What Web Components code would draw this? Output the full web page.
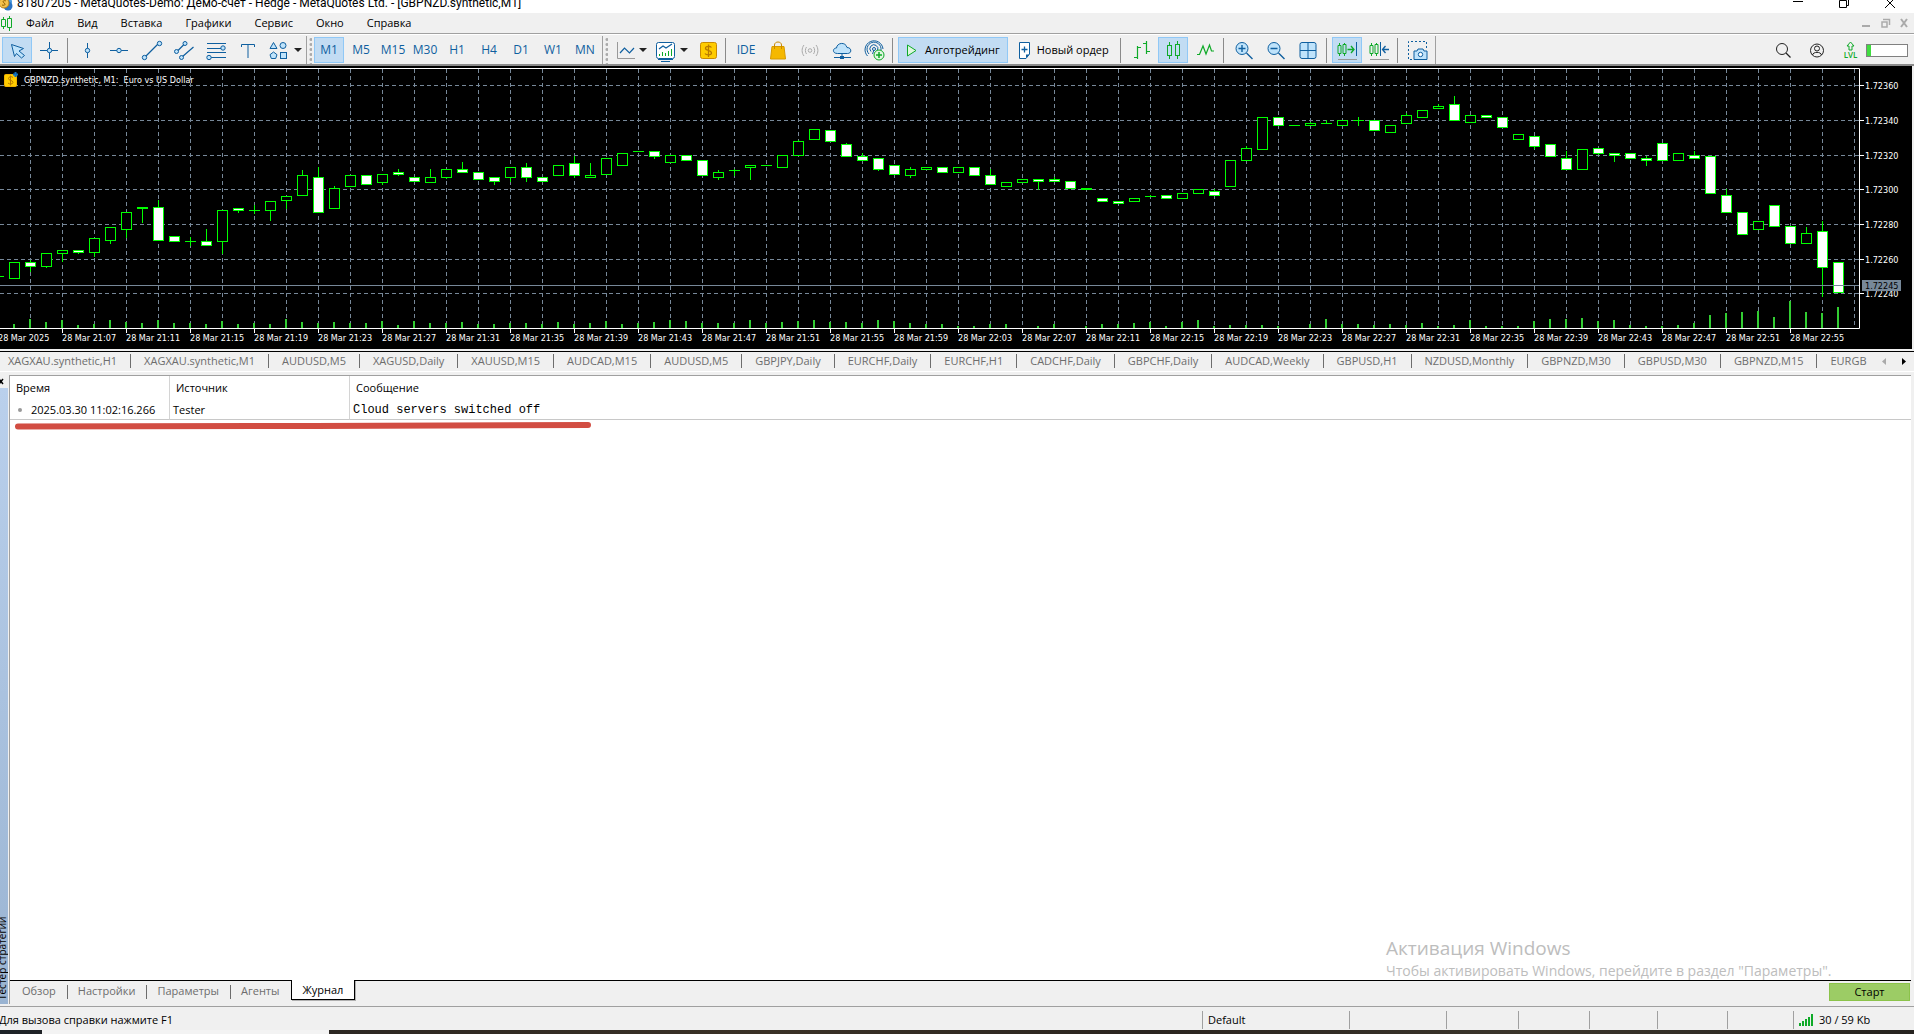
<!DOCTYPE html>
<html lang="ru">
<head>
<meta charset="utf-8">
<meta name="viewport" content="width=device-width, initial-scale=1">
<title>MetaQuotes-Demo</title>
<style>
html, body { height: 100%; }
body {
    margin: 0;
    display: flex;
    flex-direction: column;
    overflow: hidden;
    background: #f0f0f0;
    color: #000;
    font-family: "Open Sans", "Noto Sans", sans-serif;
    font-size: 11px;
    line-height: 16px;
}
</style>
</head>
<body>
<mt-titlebar>81807205 - MetaQuotes-Demo: Демо-счет - Hedge - MetaQuotes Ltd. - [GBPNZD.synthetic,M1]</mt-titlebar>
<mt-menubar items="Файл,Вид,Вставка,Графики,Сервис,Окно,Справка"></mt-menubar>
<mt-toolbar></mt-toolbar>
<mt-chart caption="GBPNZD.synthetic, M1:  Euro vs US Dollar"></mt-chart>
<mt-chart-tabs items="XAGXAU.synthetic,H1|XAGXAU.synthetic,M1|AUDUSD,M5|XAGUSD,Daily|XAUUSD,M15|AUDCAD,M15|AUDUSD,M5|GBPJPY,Daily|EURCHF,Daily|EURCHF,H1|CADCHF,Daily|GBPCHF,Daily|AUDCAD,Weekly|GBPUSD,H1|NZDUSD,Monthly|GBPNZD,M30|GBPUSD,M30|GBPNZD,M15|EURGB"></mt-chart-tabs>
<mt-tester caption="Тестер стратегии">
    <mt-journal></mt-journal>
    <os-watermark slot="overlay">
        <span slot="title">Активация Windows</span>
        Чтобы активировать Windows, перейдите в раздел "Параметры".
    </os-watermark>
</mt-tester>
<mt-statusbar>
    Для вызова справки нажмите F1
    <span slot="profile">Default</span>
    <span slot="traffic">30 / 59 Kb</span>
</mt-statusbar>
<os-taskbar></os-taskbar>

<script>
const BLUE = '#0f5f9f';
const FILL = '#bfe3fb';
const GREEN = '#0faa28';

// all toolbar icons share a 30x26 box, the size of one button
const ICONS = {
    cursor: `<path d="M9.5 7.5L21.5 11.5L17 14L22.5 18.5L19.500 21L14.500 16.500L12.500 19.500Z" fill="${FILL}" stroke="${BLUE}"/>`,
    cross: `<path d="M6 13.500H24M15.500 5V22" stroke="${BLUE}"/><circle cx="15.500" cy="13.500" r="2.200" fill="${FILL}" stroke="${BLUE}"/>`,
    vline: `<path d="M14.500 6V21" stroke="${BLUE}"/><circle cx="14.500" cy="13.500" r="2.200" fill="${FILL}" stroke="${BLUE}"/>`,
    hline: `<path d="M5 13.500H23" stroke="${BLUE}"/><circle cx="14" cy="13.500" r="2.200" fill="${FILL}" stroke="${BLUE}"/>`,
    trend: `<path d="M7 21L22 6" stroke="${BLUE}" stroke-width="1.200"/><g fill="${FILL}" stroke="${BLUE}"><circle cx="7.500" cy="20.500" r="2.200"/><circle cx="22.500" cy="6.500" r="2.200"/></g>`,
    channel: `<path d="M8 14.500L16 6.500M13 20L24.500 10" stroke="${BLUE}" stroke-width="1.200"/><g fill="${FILL}" stroke="${BLUE}"><circle cx="7.500" cy="14.500" r="2"/><circle cx="16" cy="6.500" r="2"/><circle cx="12.500" cy="20.500" r="2"/></g>`,
    fibo: `<path d="M6 6.500H25M6 11.500H20M6 15.500H25M10 20.500H25" stroke="${BLUE}"/><g fill="${FILL}" stroke="${BLUE}"><circle cx="22" cy="11" r="2.200"/><circle cx="8" cy="20.500" r="2.200"/></g>`,
    text: `<path d="M8.500 10V7.500H21.500V10M15 7.500V21" stroke="${BLUE}"/>`,
    shapes: `<g fill="${FILL}" stroke="${BLUE}"><path d="M9.500 5.500L13 11.500H6Z"/><circle cx="19" cy="8.500" r="3"/><path d="M9.500 15L13 17.700L11.700 21.500H7.300L6 17.700Z"/><rect x="16.500" y="15.500" width="6" height="6"/></g>`,
    line: `<path d="M8.500 5V21.500H26" stroke="#999"/><path d="M11 16L15.500 11L20.500 16L25 11" stroke="${BLUE}" stroke-width="1.200"/>`,
    indicators: `<rect x="6.500" y="5.500" width="18" height="16" rx="2" fill="#fff" stroke="${BLUE}"/><path d="M8 22.500H23M11 24.500H20" stroke="${BLUE}"/><path d="M9 12L13 9L16 11L22 7" stroke="${BLUE}" stroke-width="1.200"/><path d="M9.500 19V17M12.500 19V15M15.500 19V16M18.500 19V14M21.500 19V12" stroke="${GREEN}"/>`,
    symbol: `<rect x="8.500" y="5.500" width="16" height="16" rx="2" fill="#fc0" stroke="#c98a00"/><path d="M19.500 10.500C18.500 9 13.500 8.500 13.500 11.200C13.500 14 19.500 13 19.500 16C19.500 18.500 14 18.300 13 16.500M16.500 7.500V20" stroke="#b87a00" stroke-width="1.300"/>`,
    bag: `<path d="M9 9.500H21L22.500 22H7.500Z" fill="#f5b800" stroke="#d69a00"/><path d="M11.500 12V8C11.500 4 18.500 4 18.500 8V12" stroke="#c98a00"/>`,
    signal: `<g stroke="#aaa"><circle cx="15" cy="13.500" r="1.800"/><path d="M11.500 10C10 12 10 15 11.500 17M18.500 10C20 12 20 15 18.500 17M9 8C6.500 11 6.500 16 9 19M21 8C23.500 11 23.500 16 21 19"/></g>`,
    cloud: `<path d="M10.500 16.500C5 16.500 5.500 11 9.500 11C10 5.500 18.500 4.500 20 10.500C25 10.500 25 16.500 20.500 16.500Z" fill="${FILL}" stroke="${BLUE}"/><path d="M15 16.500V20M7 20.500H24" stroke="${BLUE}"/><rect x="13" y="19" width="4" height="3" fill="${BLUE}"/>`,
    antenna: `<g stroke="${BLUE}"><circle cx="15" cy="12" r="1.500"/><path d="M12 14.500A4 4 0 1 1 18.500 13.500M10 17A7 7 0 1 1 22 13M8.500 19A9 9 0 1 1 24 12M13.500 17L15 13"/></g><circle cx="20" cy="18" r="5" fill="#dff7df" stroke="${GREEN}"/><path d="M17 18H23M20 15V21" stroke="${GREEN}" stroke-width="1.500"/>`,
    bars: `<path d="M11.500 9V22M8 20.500H11.500M11.500 10.500H15M20.500 4V17M17 6.500H20.500M20.500 14.500H24" stroke="${GREEN}" stroke-width="1.200"/>`,
    candles: `<path d="M11.500 5V22M19.500 4V22" stroke="${GREEN}"/><g fill="#c2dcf3" stroke="${GREEN}"><rect x="9.500" y="8.500" width="4" height="10"/><rect x="17.500" y="7.500" width="4" height="11"/></g>`,
    polyline: `<path d="M7 17.500H9.500L13 9L16 17L19.500 8L21.500 14H24" stroke="${GREEN}" stroke-width="1.200"/>`,
    zoomin: `<circle cx="13" cy="11.500" r="6" fill="${FILL}" stroke="${BLUE}"/><path d="M9.500 11.500H16.500M13 8V15M17.500 16L23.500 22" stroke="${BLUE}" stroke-width="1.400"/>`,
    zoomout: `<circle cx="13" cy="11.500" r="6" fill="${FILL}" stroke="${BLUE}"/><path d="M9.500 11.500H16.500M17.500 16L23.500 22" stroke="${BLUE}" stroke-width="1.400"/>`,
    grid: `<rect x="7" y="5.500" width="16" height="16" rx="2" fill="${FILL}" stroke="${BLUE}"/><path d="M15 5.500V21.500M7 13.500H23" stroke="${BLUE}"/>`,
    autoscroll: `<path d="M7.500 6V19M12.500 6V19" stroke="${GREEN}"/><g fill="#c2dcf3" stroke="${GREEN}"><path d="M6 8.500H9V16.500H6ZM11 7.500H14V16.500H11Z"/></g><path d="M15.500 12.500H22M19 9L22 12.500L19 16" stroke="${GREEN}" stroke-width="1.300"/><path d="M24.500 5V19" stroke="${BLUE}"/><path d="M6 22.500H25" stroke="#999"/>`,
    shift: `<path d="M7.500 6V19M12.500 6V19" stroke="${GREEN}"/><g fill="#f0f0f0" stroke="${GREEN}"><path d="M6 8.500H9V16.500H6ZM11 7.500H14V16.500H11Z"/></g><path d="M16.500 5V19" stroke="${BLUE}"/><path d="M18.500 12.500H25M21.500 9L18.500 12.500L21.500 16" stroke="${BLUE}" stroke-width="1.300"/><path d="M6 22.500H25" stroke="#999"/>`,
    camera: `<path d="M9 22.500H5.500V4.500H23.500V11" stroke="${BLUE}" stroke-dasharray="2 2"/><path d="M11 14H14L15 12H20L21 14H24V22.500H11Z" fill="${FILL}" stroke="${BLUE}"/><circle cx="17.500" cy="17.500" r="2.200" fill="#fff" stroke="${BLUE}"/>`,
    search: `<circle cx="12" cy="12" r="5.500" stroke="#222"/><path d="M16 16L20.500 20.500" stroke="#222" stroke-width="1.300"/>`,
    user: `<g stroke="#222"><circle cx="15" cy="13.500" r="6.500"/><circle cx="15" cy="11.500" r="2.500"/><path d="M10.500 18C11 14.500 19 14.500 19.500 18"/></g>`,
    level: `<path d="M16.500 5L20 9H18V13H15V9H13Z" stroke="${GREEN}"/><text x="16.500" y="21" fill="${GREEN}" font-size="8" font-weight="600" text-anchor="middle">LVL</text>`
};

// the two buttons with captions use narrow icons
const SMALL_ICONS = {
    play: `<path d="M1.500 8L10 13.500L1.500 19Z" fill="#dff7df" stroke="${GREEN}"/>`,
    order: `<path d="M1.500 5.500H11.500V17L8 21.500H1.500Z" fill="#fff" stroke="${BLUE}"/><path d="M8 21V17.500H11.500Z" fill="${BLUE}"/><path d="M3.500 12.500H9.500M6.500 9.500V15.500" stroke="${BLUE}" stroke-width="1.300"/>`
};

// high, body top, body bottom, low, falling, volume; in pixels below the chart's top edge
const BARS = [
    [210,210,210,210,0,0], [196,196,212,212,0,4], [194,196,200,205,1,9], [187,187,200,201,0,6], [184,184,187,195,0,8],
    [184,184,186,187,1,3], [172,172,186,190,0,4], [161,161,174,177,0,8], [146,146,163,171,0,6], [141,141,142,156,1,5],
    [134,141,174,174,1,8], [170,170,175,175,1,5], [171,175,175,179,0,5], [163,175,179,179,1,4], [144,144,175,187,0,7],
    [142,142,144,146,1,4], [139,144,144,147,0,5], [135,135,144,154,0,4], [130,130,134,142,0,9], [104,109,129,129,0,6],
    [101,111,146,146,1,5], [120,122,142,142,0,6], [109,109,120,120,0,5], [109,109,118,118,1,5], [108,108,116,118,0,7],
    [103,106,108,109,1,3], [111,111,115,115,1,7], [103,111,116,116,0,5], [103,103,111,112,0,5], [96,103,106,106,1,6],
    [106,106,113,113,1,4], [111,111,115,118,1,4], [101,101,111,115,0,5], [97,101,111,115,1,5], [111,111,115,115,1,4],
    [99,99,109,109,0,6], [90,97,109,111,1,4], [97,109,111,111,0,5], [92,92,108,108,0,7], [87,87,99,99,0,4],
    [85,85,85,85,0,5], [85,85,90,92,1,6], [89,89,96,96,0,8], [89,89,94,94,1,7], [94,94,109,109,1,5],
    [104,106,111,113,0,5], [103,104,104,109,0,5], [99,99,101,113,0,8], [99,99,99,99,0,5], [89,89,101,101,0,6],
    [74,75,89,89,0,7], [63,63,73,73,0,8], [64,64,75,75,1,6], [77,78,90,90,1,6], [87,90,94,94,1,5],
    [92,92,103,104,1,8], [99,99,108,108,1,7], [101,103,109,111,0,5], [101,101,103,103,0,4], [101,101,106,106,1,4],
    [101,101,106,106,0,2], [101,101,109,109,1,2], [103,109,118,118,1,4], [116,116,120,120,0,4], [113,113,116,116,0,0],
    [113,113,115,123,1,2], [111,113,115,115,1,4], [115,115,122,122,1,0], [122,122,123,123,1,2], [132,132,135,135,1,4],
    [135,135,137,137,1,4], [132,132,135,135,0,5], [129,130,130,130,0,6], [129,129,132,132,1,2], [127,127,132,132,0,6],
    [123,123,127,127,0,8], [123,125,129,129,1,2], [94,94,120,120,0,3], [80,82,94,94,0,3], [51,51,83,83,0,3],
    [51,51,59,59,1,2], [59,59,59,59,0,0], [56,57,59,59,0,4], [54,57,57,57,0,9], [54,54,59,59,0,4],
    [51,54,54,59,0,4], [54,54,64,64,1,3], [59,59,66,66,0,4], [47,49,57,57,0,3], [44,44,51,51,0,5],
    [38,40,42,42,0,2], [30,38,54,54,1,3], [49,49,56,56,0,8], [49,49,51,51,1,2], [51,51,61,61,1,2],
    [68,68,73,73,0,2], [70,70,80,82,1,7], [78,78,90,90,1,9], [85,92,103,103,1,9], [83,83,103,103,0,10],
    [82,82,87,88,1,7], [87,87,89,95,1,8], [87,87,92,92,1,3], [90,92,94,99,1,2], [77,77,94,94,1,2],
    [87,87,94,94,0,3], [85,89,92,92,1,5], [90,90,127,127,1,13], [123,129,146,146,1,15], [146,146,168,168,1,16],
    [155,155,163,163,0,17], [139,139,160,160,1,11], [160,160,177,177,1,27], [161,167,177,177,0,16], [155,165,201,230,1,15],
    [196,196,226,226,1,21]
];

const PRICES = [['1.72360', 19], ['1.72340', 54], ['1.72320', 89], ['1.72300', 123], ['1.72280', 158], ['1.72260', 193], ['1.72240', 227]];

class MtElement extends HTMLElement {
    constructor() {
        super();
        this.template = document.createElement('template');
        this.attachShadow({ mode: 'open' });
    }
    get items() {
        return this.getAttribute('items').split(this.delimiter || ',');
    }
    connectedCallback() {
        this.render();
    }
    render() {
        this.template.innerHTML = this.html;
        this.shadowRoot.innerHTML = '';
        this.shadowRoot.appendChild(this.template.content.cloneNode(true));
    }
}

class MtTitlebar extends MtElement {
    static get tag() { return 'mt-titlebar'; }
    get html() {
        return `
        <style>
        :host {
            display: flex;
            flex: none;
            align-items: center;
            box-sizing: border-box;
            height: 13px;
            padding-bottom: 8px;
            overflow: hidden;
            background: #fff;
            font-family: Roboto, "Open Sans", sans-serif;
            font-size: 12px;
        }
        .title { flex: 1; white-space: nowrap; margin-left: 4px; }
        button {
            width: 46px;
            height: 24px;
            padding: 0;
            border: 0;
            background: none;
        }
        svg { display: block; margin: auto; fill: none; }
        .logo { margin: 0; }
        </style>
        <svg class="logo" width="13" height="16">
            <circle cx="6" cy="7" r="6" fill="#4b9be0"/><circle cx="8" cy="11" r="4.500" fill="#2b74c4"/>
            <circle cx="4" cy="8" r="5" fill="#f3c14b" stroke="#b98116"/><path d="M6 6C4 5 2 6 4 8C6 9 5 11 2 10" stroke="#8a5a00"/>
        </svg>
        <span class="title"><slot></slot></span>
        <button aria-label="Свернуть"><svg width="12" height="12"><path d="M0 4.500H10" stroke="#000"/></svg></button>
        <button aria-label="Восстановить"><svg width="12" height="12"><path d="M.5 3.500H7.500V10.500H.5ZM2.500 3V1.500H9.500V8.500H8" stroke="#000"/></svg></button>
        <button aria-label="Закрыть"><svg width="12" height="12"><path d="M0 1L10 11M10 1L0 11" stroke="#000"/></svg></button>`;
    }
}

class MtMenubar extends MtElement {
    static get tag() { return 'mt-menubar'; }
    get html() {
        return `
        <style>
        :host {
            display: flex;
            flex: none;
            align-items: center;
            height: 20px;
            border-bottom: 1px solid #a0a0a0;
        }
        nav { display: flex; flex: 1; padding-left: 2px; }
        button {
            border: 0;
            padding: 0 12px 0 11px;
            background: none;
            color: inherit;
            font: inherit;
        }
        .mdi { padding: 0 4px; }
        svg { display: block; fill: none; }
        </style>
        <svg width="13" height="16"><path d="M3.500 2V14M9.500 1V16" stroke="${GREEN}"/><path d="M1.500 4.500H5.500V11.500H1.500ZM7.500 3.500H11.500V12.500H7.500Z" fill="#f0f0f0" stroke="${GREEN}"/></svg>
        <nav>${this.items.map(item => `<button>${item}</button>`).join('')}</nav>
        <button class="mdi" aria-label="Свернуть окно"><svg width="11" height="10"><path d="M1 8H9" stroke="#aaa" stroke-width="2"/></svg></button>
        <button class="mdi" aria-label="Восстановить окно"><svg width="11" height="10"><path d="M3 1.500H9.500V7M2 4H7V9H2Z" stroke="#aaa" stroke-width="1.500"/></svg></button>
        <button class="mdi" aria-label="Закрыть окно"><svg width="11" height="10"><path d="M2 1L8 9M8 1L2 9" stroke="#aaa" stroke-width="2"/></svg></button>`;
    }
}

class MtTool extends MtElement {
    static get tag() { return 'mt-tool'; }
    get html() {
        const icon = this.getAttribute('icon');
        const label = this.getAttribute('label');
        let content = '<slot></slot>';
        if (ICONS[icon]) {
            content = `<svg width="30" height="26">${ICONS[icon]}</svg>`;
        }
        if (SMALL_ICONS[icon]) {
            content = `<svg width="12" height="26">${SMALL_ICONS[icon]}</svg><slot></slot>`;
        }
        if (this.hasAttribute('drop')) {
            content += '<i></i>';
        }
        return `
        <style>
        :host { display: block; flex: none; }
        button {
            display: flex;
            align-items: center;
            justify-content: center;
            box-sizing: border-box;
            width: 30px;
            height: 26px;
            padding: 0;
            border: 0;
            background: none;
            color: ${BLUE};
            font: inherit;
            font-size: 12px;
            white-space: nowrap;
        }
        :host([pressed]) button { background: #c2dcf3; box-shadow: inset 0 0 0 1px #90c8f6; }
        :host([drop]) button { width: 39px; padding-right: 8px; }
        :host([wide]) button {
            width: auto;
            padding: 0 8px;
            gap: 7px;
            color: #000;
            font-size: 11px;
        }
        svg { display: block; flex: none; fill: none; }
        i {
            flex: none;
            margin-right: -4px;
            border: 4px solid transparent;
            border-top-color: #222;
            border-bottom: 0;
        }
        </style>
        <button ${label ? `aria-label="${label}"` : ''} ${this.hasAttribute('pressed') ? 'aria-pressed="true"' : ''}>${content}</button>`;
    }
}

class MtToolbar extends MtElement {
    static get tag() { return 'mt-toolbar'; }
    get html() {
        const frames = ['M1', 'M5', 'M15', 'M30', 'H1', 'H4', 'D1', 'W1', 'MN'];
        return `
        <style>
        :host {
            display: flex;
            flex: none;
            align-items: center;
            gap: 2px;
            height: 28px;
            padding: 1px 0 0 2px;
            border-top: 1px solid #fff;
            border-bottom: 2px solid #8c8c8c;
        }
        .sep {
            flex: none;
            width: 1px;
            height: 25px;
            margin: 0 3px 0 1px;
            background: #8a8a8a;
        }
        .grip {
            flex: none;
            box-sizing: border-box;
            width: 6px;
            height: 28px;
            border-left: 1px solid #a0a0a0;
            background: radial-gradient(circle, #aaa 1px, transparent 2px) 2px 1px / 4px 5px repeat-y;
        }
        .end { width: 1px; height: 28px; background: #a0a0a0; }
        .account { display: flex; align-items: center; gap: 2px; margin-left: auto; margin-right: 6px; }
        progress {
            appearance: none;
            box-sizing: border-box;
            width: 42px;
            height: 13px;
            border: 1px solid #808080;
            background: #fff;
        }
        progress::-webkit-progress-bar { background: #fff; }
        progress::-webkit-progress-value { background: #3fdc3f; }
        </style>
        <mt-tool icon="cursor" label="Курсор" pressed></mt-tool>
        <mt-tool icon="cross" label="Перекрестие"></mt-tool>
        <div class="sep"></div>
        <mt-tool icon="vline" label="Вертикальная линия"></mt-tool>
        <mt-tool icon="hline" label="Горизонтальная линия"></mt-tool>
        <mt-tool icon="trend" label="Трендовая линия"></mt-tool>
        <mt-tool icon="channel" label="Канал"></mt-tool>
        <mt-tool icon="fibo" label="Фибоначчи"></mt-tool>
        <mt-tool icon="text" label="Текст"></mt-tool>
        <mt-tool icon="shapes" label="Фигуры" drop></mt-tool>
        <div class="grip"></div>
        ${frames.map((frame, i) => `<mt-tool ${i === 0 ? 'pressed' : ''}>${frame}</mt-tool>`).join('')}
        <div class="grip"></div>
        <mt-tool icon="line" label="Тип графика" drop></mt-tool>
        <mt-tool icon="indicators" label="Индикаторы" drop></mt-tool>
        <mt-tool icon="symbol" label="Символ"></mt-tool>
        <div class="sep"></div>
        <mt-tool>IDE</mt-tool>
        <mt-tool icon="bag" label="Маркет"></mt-tool>
        <mt-tool icon="signal" label="Сигналы"></mt-tool>
        <mt-tool icon="cloud" label="Облако"></mt-tool>
        <mt-tool icon="antenna" label="Хостинг"></mt-tool>
        <div class="sep"></div>
        <mt-tool icon="play" wide pressed>Алготрейдинг</mt-tool>
        <mt-tool icon="order" wide>Новый ордер</mt-tool>
        <div class="sep"></div>
        <mt-tool icon="bars" label="Бары"></mt-tool>
        <mt-tool icon="candles" label="Свечи" pressed></mt-tool>
        <mt-tool icon="polyline" label="Линия"></mt-tool>
        <div class="sep"></div>
        <mt-tool icon="zoomin" label="Увеличить"></mt-tool>
        <mt-tool icon="zoomout" label="Уменьшить"></mt-tool>
        <mt-tool icon="grid" label="Расположить окна"></mt-tool>
        <div class="sep"></div>
        <mt-tool icon="autoscroll" label="Автопрокрутка" pressed></mt-tool>
        <mt-tool icon="shift" label="Сдвиг графика"></mt-tool>
        <div class="sep"></div>
        <mt-tool icon="camera" label="Снимок"></mt-tool>
        <div class="end"></div>
        <div class="account">
            <mt-tool icon="search" label="Поиск"></mt-tool>
            <mt-tool icon="user" label="Профиль"></mt-tool>
            <mt-tool icon="level" label="Уровень"></mt-tool>
            <progress value="10" max="100" aria-label="Прогресс"></progress>
        </div>`;
    }
}

class MtChart extends MtElement {
    constructor() {
        super();
        this._resize = new ResizeObserver(() => this.render());
    }
    static get tag() { return 'mt-chart'; }
    connectedCallback() {
        super.connectedCallback();
        this._resize.observe(this);
    }
    disconnectedCallback() {
        this._resize.disconnect();
    }
    _bars(last) {
        return BARS.map((bar, i) => {
            const [high, top, bottom, low, falling, volume] = bar;
            const x = last - (BARS.length - 1 - i) * 16;
            const body = top === bottom
                ? `<rect x="${x - 5}" y="${top}" width="11" height="1" fill="#0f0"/>`
                : `<rect x="${x - 4.5}" y="${top + .5}" width="10" height="${bottom - top}" fill="${falling ? '#fff' : '#000'}" stroke="#0f0"/>`;
            return `<rect x="${x - 1}" y="${262 - volume}" width="2" height="${volume}" fill="#32cd32"/>
                <rect x="${x}" y="${high}" width="1" height="${low - high + 1}" fill="#0f0"/>${body}`;
        }).join('');
    }
    _times(last) {
        let html = '';
        for (let i = 0; i <= 28; i++) {
            const x = last - 48 - i * 64;
            const minutes = 22 * 60 + 55 - i * 4;
            const clock = `${Math.floor(minutes / 60)}:${String(minutes % 60).padStart(2, '0')}`;
            html += `<rect x="${x}" y="262" width="1" height="5" fill="#fff"/>
                <text x="${x}" y="275">28 Mar ${i === 28 ? '2025' : clock}</text>`;
        }
        return html;
    }
    get html() {
        const width = this.clientWidth;
        const edge = width - 53;
        const last = edge - 21;
        let grid = PRICES.map(price => `M0 ${price[1] + .5}H${edge}`).join('');
        for (let x = last + 16; x > 0; x -= 32) {
            grid += `M${x + .5} 3V262`;
        }
        return `
        <style>
        :host {
            display: block;
            flex: none;
            height: 283px;
            margin-right: 2px;
            background: #000;
            font-family: "DejaVu Sans Condensed", "Open Sans", sans-serif;
            font-size: 9px;
        }
        svg { display: block; width: 100%; height: 100%; }
        text { fill: #fff; white-space: pre; }
        </style>
        <svg>
            <path d="${grid}" fill="none" stroke="#778899" stroke-dasharray="4 3"/>
            ${this._bars(last)}
            <rect y="219" width="${edge}" height="1" fill="#778899"/>
            <path d="M0 2.500H${edge + .5}V262.500H0" fill="none" stroke="#fff"/>
            ${this._times(last)}
            ${PRICES.map(([price, y]) => `<rect x="${edge}" y="${y}" width="5" height="1" fill="#fff"/><text x="${edge + 6}" y="${y + 4}">${price}</text>`).join('')}
            <rect x="${edge + 3}" y="214" width="39" height="11" fill="#778899"/>
            <text x="${edge + 6}" y="223" style="fill: #000">1.72245</text>
            <rect x="4.500" y="8.500" width="12" height="12" rx="1" fill="#fc0" stroke="#f0b000"/>
            <path d="M13 11.500C12 10 8.500 10.500 8.500 12.500C8.500 15 13 14 13 16.300C13 18.500 9 18.500 8 17M10.500 9.500V19.500" fill="none" stroke="#b87a00"/>
            <path d="M13 8.500H18M15.500 6V11" stroke="#0f6fbf" stroke-width="2"/>
            <text x="24" y="17">${this.getAttribute('caption')}</text>
        </svg>`;
    }
}

class MtChartTabs extends MtElement {
    static get tag() { return 'mt-chart-tabs'; }
    get delimiter() { return '|'; }
    get html() {
        return `
        <style>
        :host {
            display: flex;
            flex: none;
            height: 19px;
            margin-top: 2px;
            margin-bottom: 3px;
            border-top: 1px solid #000;
            border-bottom: 1px solid #fff;
            color: #6d6d6d;
        }
        nav { display: flex; flex: 1; min-width: 0; overflow: hidden; padding: 2px 0 3px; margin-left: -5px; }
        button {
            flex: none;
            padding: 0;
            border: 0;
            background: none;
            color: inherit;
            font: inherit;
            line-height: 14px;
        }
        nav button { padding: 0 13px; border-right: 1px solid #6d6d6d; }
        nav button:last-child { border: 0; padding-right: 4px; }
        .scroll { width: 20px; }
        svg { display: block; margin: auto; }
        </style>
        <nav>${this.items.map(item => `<button>${item}</button>`).join('')}</nav>
        <button class="scroll" aria-label="Назад"><svg width="4" height="7"><path d="M4 0V7L0 3.500Z" fill="#aaa"/></svg></button>
        <button class="scroll" aria-label="Вперед"><svg width="4" height="7"><path d="M0 0V7L4 3.500Z"/></svg></button>`;
    }
}

class MtJournal extends MtElement {
    static get tag() { return 'mt-journal'; }
    get html() {
        return `
        <style>
        :host { display: block; position: relative; }
        table {
            width: 100%;
            table-layout: fixed;
            border-collapse: separate;
            border-spacing: 0;
        }
        th, td { box-sizing: border-box; border-right: 1px solid #d4d4d4; text-align: left; font-weight: 400; }
        th:last-child, td:last-child { border-right: 0; }
        th { height: 24px; padding: 0 6px; }
        td { height: 20px; padding: 0 3px; border-bottom: 1px solid #c8c8c8; }
        th:first-child { width: 160px; }
        th:nth-child(2) { width: 180px; }
        .time::before {
            content: '';
            display: inline-block;
            width: 4px;
            height: 4px;
            margin: 0 9px 2px 5px;
            border-radius: 50%;
            background: #999;
        }
        .message { font-family: "Liberation Mono", monospace; font-size: 12px; }
        .mark { position: absolute; left: 4px; top: 45px; }
        </style>
        <table>
            <thead><tr><th>Время</th><th>Источник</th><th>Сообщение</th></tr></thead>
            <tbody><tr><td class="time">2025.03.30 11:02:16.266</td><td>Tester</td><td class="message">Cloud servers switched off</td></tr></tbody>
        </table>
        <svg class="mark" width="580" height="10" fill="none"><path d="M4 5.500L300 5L574 4" stroke="#d24d42" stroke-width="6" stroke-linecap="round"/></svg>`;
    }
}

class MtTester extends MtElement {
    static get tag() { return 'mt-tester'; }
    get html() {
        return `
        <style>
        :host { display: flex; flex: 1; min-height: 0; margin-right: 3px; }
        aside { display: flex; flex-direction: column; flex: none; width: 8px; margin-right: 1px; }
        aside button { height: 13px; padding: 0; border: 0; background: none; }
        aside svg { display: block; }
        .caption {
            flex: 1;
            display: flex;
            align-items: flex-end;
            writing-mode: vertical-rl;
            transform: rotate(180deg);
            padding-top: 4px;
            overflow: hidden;
            background: linear-gradient(#9ab4d2, #bad0ec);
            white-space: nowrap;
            font-size: 10px;
            line-height: 12px;
        }
        main {
            position: relative;
            display: flex;
            flex-direction: column;
            flex: 1;
            min-width: 0;
            border: 1px solid #a0a0a0;
            border-width: 1px 0 0 1px;
        }
        .page { flex: 1; background: #fff; border-bottom: 1px solid #000; }
        footer {
            display: flex;
            height: 23px;
            padding-left: 1px;
            color: #6d6d6d;
        }
        footer button { border: 0; background: none; color: inherit; font: inherit; }
        .tab { height: 19px; padding: 0 11px; position: relative; }
        .tab + .tab::before {
            content: '';
            position: absolute;
            left: 0;
            top: 4px;
            height: 14px;
            border-left: 1px solid #6d6d6d;
        }
        .tab.active {
            height: 20px;
            margin-top: -1px;
            border: 1px solid #000;
            border-top: 0;
            background: #fff;
            color: #000;
            box-shadow: 1px 1px #b0b0b0;
        }
        .tab.active::before { display: none; }
        footer .start {
            width: 81px;
            height: 18px;
            margin: 2px 1px 0 auto;
            padding: 0;
            background: #9ccc65;
            box-shadow: inset 0 0 0 1px #8bc34a;
            color: #000;
        }
        </style>
        <aside>
            <button aria-label="Закрыть"><svg width="8" height="9"><path d="M-1 2L3 7M3 2L-1 7" stroke="#000" stroke-width="1.500"/></svg></button>
            <div class="caption">${this.getAttribute('caption')}</div>
        </aside>
        <main>
            <div class="page"><slot></slot></div>
            <footer>
                <button class="tab">Обзор</button>
                <button class="tab">Настройки</button>
                <button class="tab">Параметры</button>
                <button class="tab">Агенты</button>
                <button class="tab active">Журнал</button>
                <button class="start">Старт</button>
            </footer>
            <slot name="overlay"></slot>
        </main>`;
    }
}

class OsWatermark extends MtElement {
    static get tag() { return 'os-watermark'; }
    get html() {
        return `
        <style>
        :host {
            position: absolute;
            right: 70px;
            bottom: 23px;
            width: 455px;
            color: #bdbdbd;
            font-size: 14px;
            line-height: 20px;
            white-space: nowrap;
            pointer-events: none;
        }
        div { font-size: 19px; line-height: 26px; }
        </style>
        <div><slot name="title"></slot></div>
        <slot></slot>`;
    }
}

class MtStatusbar extends MtElement {
    static get tag() { return 'mt-statusbar'; }
    get html() {
        return `
        <style>
        :host {
            display: grid;
            flex: none;
            grid-template-columns: 1fr 147px 97px 72px 71px 68px 70px 66px 121px;
            height: 19px;
            margin-top: 2px;
            padding-top: 4px;
            border-top: 1px solid #a0a0a0;
        }
        div {
            display: flex;
            align-items: center;
            gap: 6px;
            height: 18px;
            padding-left: 5px;
            border-left: 1px solid #a0a0a0;
            white-space: nowrap;
        }
        .hint { padding: 0; margin-left: -1px; border: 0; }
        </style>
        <div class="hint"><slot></slot></div>
        <div><slot name="profile"></slot></div>
        <div></div><div></div><div></div><div></div><div></div><div></div>
        <div><svg width="14" height="12"><path d="M1 12V9M4 12V7M7 12V5M10 12V3M13 12V0" stroke="${GREEN}" stroke-width="2"/></svg><slot name="traffic"></slot></div>`;
    }
}

class OsTaskbar extends MtElement {
    static get tag() { return 'os-taskbar'; }
    get html() {
        return `
        <style>
        :host {
            display: block;
            flex: none;
            height: 4px;
            background: linear-gradient(90deg, #1d2227, #2e2822 20%, #3a3126 40%, #2a241f 60%, #3b352b 80%, #26231f);
        }
        div { width: 287px; height: 4px; margin-left: 42px; background: #f3f3f3; }
        </style>
        <div></div>`;
    }
}

[MtTitlebar, MtMenubar, MtTool, MtToolbar, MtChart, MtChartTabs, MtJournal, MtTester, OsWatermark, MtStatusbar, OsTaskbar]
    .forEach(element => window.customElements.define(element.tag, element));
</script>
</body>
</html>
